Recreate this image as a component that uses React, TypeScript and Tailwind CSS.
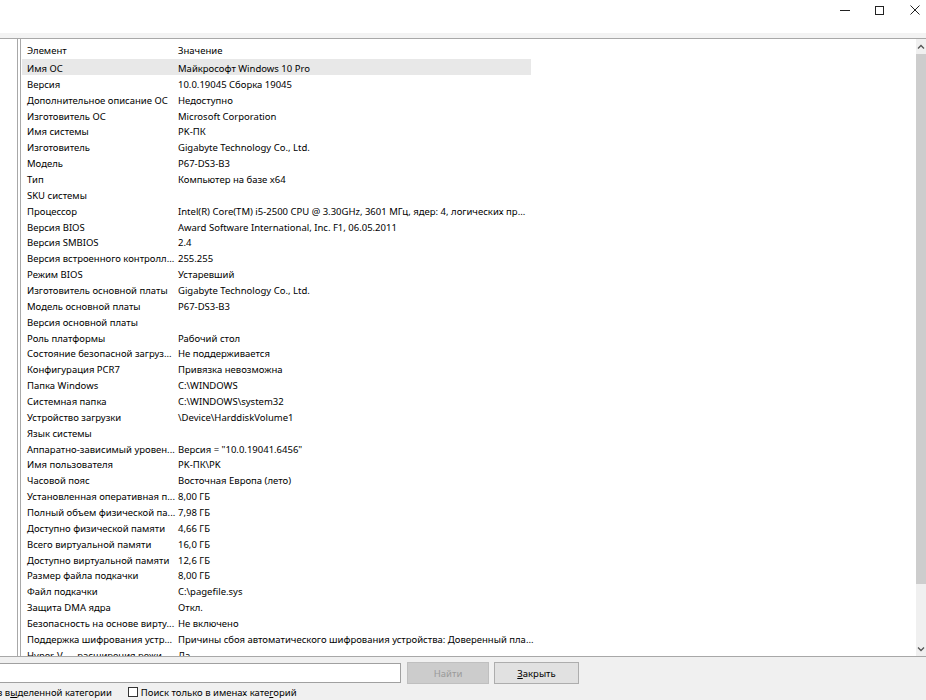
import React from "react";

type Row = [string, string];

const rows: Row[] = [
  ["Имя ОС", "Майкрософт Windows 10 Pro"],
  ["Версия", "10.0.19045 Сборка 19045"],
  ["Дополнительное описание ОС", "Недоступно"],
  ["Изготовитель ОС", "Microsoft Corporation"],
  ["Имя системы", "PK-ПК"],
  ["Изготовитель", "Gigabyte Technology Co., Ltd."],
  ["Модель", "P67-DS3-B3"],
  ["Тип", "Компьютер на базе x64"],
  ["SKU системы", ""],
  ["Процессор", "Intel(R) Core(TM) i5-2500 CPU @ 3.30GHz, 3601 МГц, ядер: 4, логических пр..."],
  ["Версия BIOS", "Award Software International, Inc. F1, 06.05.2011"],
  ["Версия SMBIOS", "2.4"],
  ["Версия встроенного контролл...", "255.255"],
  ["Режим BIOS", "Устаревший"],
  ["Изготовитель основной платы", "Gigabyte Technology Co., Ltd."],
  ["Модель основной платы", "P67-DS3-B3"],
  ["Версия основной платы", ""],
  ["Роль платформы", "Рабочий стол"],
  ["Состояние безопасной загруз...", "Не поддерживается"],
  ["Конфигурация PCR7", "Привязка невозможна"],
  ["Папка Windows", "C:\\WINDOWS"],
  ["Системная папка", "C:\\WINDOWS\\system32"],
  ["Устройство загрузки", "\\Device\\HarddiskVolume1"],
  ["Язык системы", ""],
  ["Аппаратно-зависимый уровен...", "Версия = \"10.0.19041.6456\""],
  ["Имя пользователя", "PK-ПК\\PK"],
  ["Часовой пояс", "Восточная Европа (лето)"],
  ["Установленная оперативная п...", "8,00 ГБ"],
  ["Полный объем физической па...", "7,98 ГБ"],
  ["Доступно физической памяти", "4,66 ГБ"],
  ["Всего виртуальной памяти", "16,0 ГБ"],
  ["Доступно виртуальной памяти", "12,6 ГБ"],
  ["Размер файла подкачки", "8,00 ГБ"],
  ["Файл подкачки", "C:\\pagefile.sys"],
  ["Защита DMA ядра", "Откл."],
  ["Безопасность на основе вирту...", "Не включено"],
  ["Поддержка шифрования устр...", "Причины сбоя автоматического шифрования устройства: Доверенный пла..."],
  ["Hyper-V — расширения режи...", "Да"],
];

const font = { fontFamily: '"Noto Sans", "Open Sans", sans-serif' };

function WinButtons() {
  return (
    <div className="flex gap-[12px] pt-[5px]">
      <svg width="23" height="10" viewBox="0 0 23 10">
        <line x1="7" y1="5.5" x2="17" y2="5.5" stroke="#222" strokeWidth="1" />
      </svg>
      <svg width="23" height="10" viewBox="0 0 23 10">
        <rect x="7.5" y="1.5" width="8" height="8" fill="none" stroke="#222" strokeWidth="1" />
      </svg>
      <svg width="23" height="10" viewBox="0 0 23 10">
        <path d="M7.5 0.5 L16.5 9.5 M16.5 0.5 L7.5 9.5" stroke="#222" strokeWidth="1" />
      </svg>
    </div>
  );
}

function Scrollbar() {
  return (
    <div className="w-[10px] flex flex-col bg-[#f0f0f0]">
      <div className="h-[15px] flex items-center justify-center">
        <svg width="8" height="6" viewBox="0 0 8 6">
          <path d="M1 4.5 L4 1.5 L7 4.5" fill="none" stroke="#555" strokeWidth="1.3" />
        </svg>
      </div>
      <div className="h-[530px] bg-[#cdcdcd]" />
      <div className="flex-1" />
      <div className="h-[15px] flex items-center justify-center">
        <svg width="8" height="6" viewBox="0 0 8 6">
          <path d="M1 1.5 L4 4.5 L7 1.5" fill="none" stroke="#555" strokeWidth="1.3" />
        </svg>
      </div>
    </div>
  );
}

export default function App() {
  return (
    <div
      className="w-[926px] h-[700px] flex flex-col bg-white overflow-hidden text-[9.5px] leading-[13px] text-black"
      style={font}
    >
      {/* title bar */}
      <div className="h-[33px] flex justify-end bg-white">
        <WinButtons />
      </div>
      <div className="h-[6px] bg-[#f3f3f3] border-b border-[#a8a8a8]" />

      {/* main area */}
      <div className="h-[617px] flex">
        <div className="w-[18px] bg-white border-r border-[#a8a8a8]" />
        <div className="w-[2px] bg-white" />
        <div className="flex-1 flex border-l border-[#a8a8a8] bg-white overflow-hidden">
          <div className="flex-1 pl-[1px] overflow-hidden">
            <div className="h-[20px] pt-[2px] flex items-center">
              <div className="w-[150px] pl-[5px] whitespace-nowrap">Элемент</div>
              <div className="w-[359px] pl-[6px] whitespace-nowrap">Значение</div>
            </div>
            {rows.map(([k, v], i) => (
              <div
                key={i}
                className={`h-[15.86px] pt-[3px] flex items-center w-[509px] ${i === 0 ? "bg-[#e8e8e8]" : ""}`}
              >
                <div className="w-[150px] shrink-0 pl-[5px] whitespace-nowrap">{k}</div>
                <div className="w-[359px] shrink-0 pl-[6px] whitespace-nowrap">{v}</div>
              </div>
            ))}
          </div>
          <Scrollbar />
        </div>
      </div>

      {/* bottom panel */}
      <div className="flex-1 bg-[#f0f0f0] border-t border-[#a8a8a8]">
        <div className="flex items-center pt-[4px] h-[28px]">
          <div className="w-[411px] ml-[-10px] h-[20px] bg-white border border-[#a0a0a0]" />
          <div className="ml-[6px] w-[82px] h-[22px] flex items-center justify-center bg-[#cccccc] border border-[#bfbfbf] text-[#9a9a9a]">
            Найти
          </div>
          <div className="ml-[5px] w-[85px] h-[22px] flex items-center justify-center bg-[#e1e1e1] border border-[#adadad]">
            <span><span className="underline">З</span>акрыть</span>
          </div>
        </div>
        <div className="flex items-center h-[14px] whitespace-nowrap">
          <span className="ml-[-3px]">
            в в<span className="underline">ы</span>деленной категории
          </span>
          <span className="ml-[16px] w-[10px] h-[10px] border border-[#333] bg-white" />
          <span className="ml-[3px]">
            Поиск только в именах кате<span className="underline">г</span>орий
          </span>
        </div>
      </div>
    </div>
  );
}
